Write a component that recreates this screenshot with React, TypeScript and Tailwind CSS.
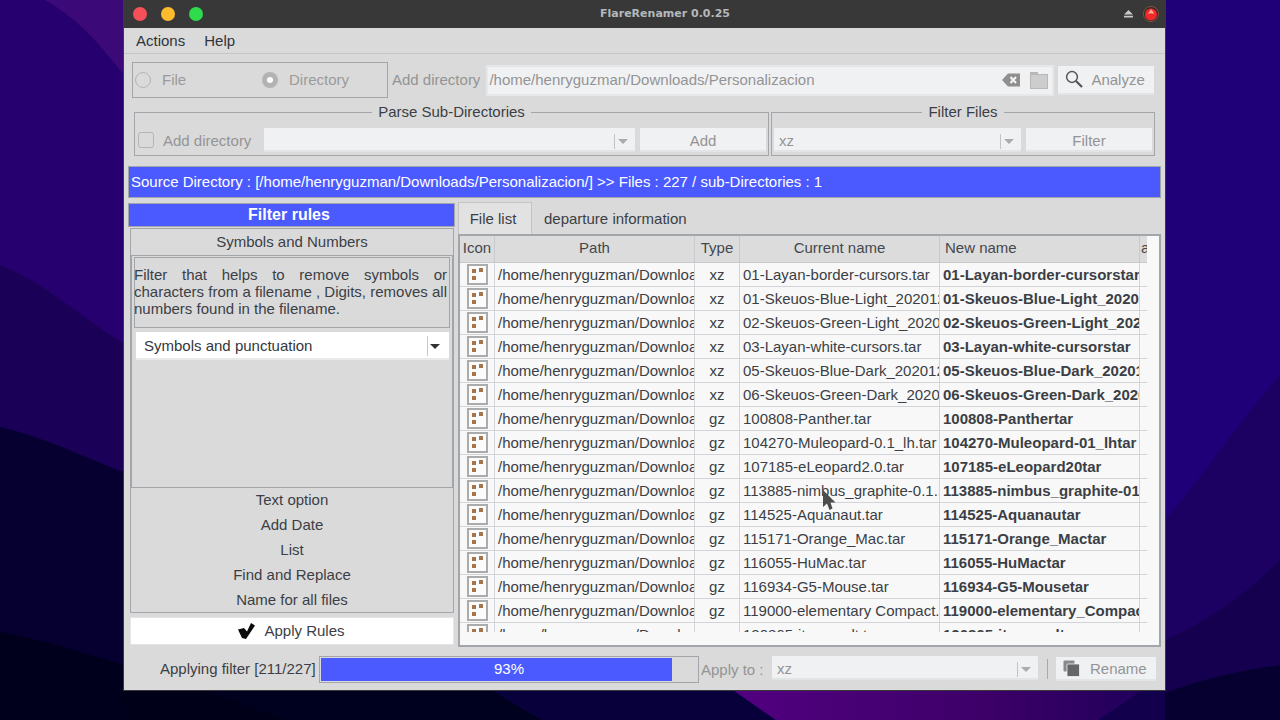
import React from "react";

const rows: [string, string, string][] = [
  ["xz", "01-Layan-border-cursors.tar", "01-Layan-border-cursorstar"],
  ["xz", "01-Skeuos-Blue-Light_20201222", "01-Skeuos-Blue-Light_20201222tar"],
  ["xz", "02-Skeuos-Green-Light_20201222", "02-Skeuos-Green-Light_20201222tar"],
  ["xz", "03-Layan-white-cursors.tar", "03-Layan-white-cursorstar"],
  ["xz", "05-Skeuos-Blue-Dark_20201222", "05-Skeuos-Blue-Dark_20201222tar"],
  ["xz", "06-Skeuos-Green-Dark_20201222", "06-Skeuos-Green-Dark_20201222tar"],
  ["gz", "100808-Panther.tar", "100808-Panthertar"],
  ["gz", "104270-Muleopard-0.1_lh.tar", "104270-Muleopard-01_lhtar"],
  ["gz", "107185-eLeopard2.0.tar", "107185-eLeopard20tar"],
  ["gz", "113885-nimbus_graphite-0.1..", "113885-nimbus_graphite-01tar"],
  ["gz", "114525-Aquanaut.tar", "114525-Aquanautar"],
  ["gz", "115171-Orange_Mac.tar", "115171-Orange_Mactar"],
  ["gz", "116055-HuMac.tar", "116055-HuMactar"],
  ["gz", "116934-G5-Mouse.tar", "116934-G5-Mousetar"],
  ["gz", "119000-elementary Compact.", "119000-elementary_Compact"],
  ["gz", "120865-itunes-alt.tar", "120865-itunes-alt"],
];

function Wallpaper() {
  return (
    <svg className="absolute inset-0" width="1280" height="720" viewBox="0 0 1280 720">
      <defs>
        <linearGradient id="bp" x1="0" y1="0" x2="1" y2="0">
          <stop offset="0" stopColor="#520080" />
          <stop offset="0.6" stopColor="#3c0068" />
          <stop offset="1" stopColor="#1c0058" />
        </linearGradient>
      </defs>
      <rect width="1280" height="720" fill="#270070" />
      <rect x="640" width="640" height="720" fill="#1f0078" />
      <path d="M45 0 C80 20 100 45 124 75 L124 0 Z" fill="#3c0a78" />
      <path d="M0 265 C50 285 90 325 124 343 L130 720 L0 720 Z" fill="#1b0058" />
      <path d="M0 427 C45 437 90 460 124 472 L130 720 L0 720 Z" fill="#05002f" />
      <path d="M0 632 C45 640 90 655 124 665 L300 720 L0 720 Z" fill="#00001c" />
      <path d="M1280 375 C1240 420 1200 480 1165 520 L1165 720 L1280 720 Z" fill="#1c0062" />
      <path d="M1280 560 C1240 600 1200 625 1165 640 L1165 720 L1280 720 Z" fill="#150050" />
      <path d="M1280 665 C1240 670 1200 680 1165 693 L1165 720 L1280 720 Z" fill="#05002f" />
      <path d="M210 690 L284 720 L130 720 L120 690 Z" fill="#000018" />
      <path d="M284 720 L210 690 L492 690 L542 720 Z" fill="#00001f" />
      <path d="M492 690 L733 690 L776 720 L542 720 Z" fill="#08003a" />
      <path d="M733 690 L1165 690 L1098 720 L776 720 Z" fill="url(#bp)" />
      <path d="M1098 720 L1165 675 L1165 720 Z" fill="#12004c" />
    </svg>
  );
}

function RowIcon() {
  return (
    <svg width="21" height="21" viewBox="0 0 21 21" className="block">
      <rect x="1" y="1" width="19" height="19" fill="#fbfbfb" stroke="#ababab" strokeWidth="2" />
      <rect x="5" y="5" width="4" height="4" fill="#a5754a" />
      <rect x="12" y="4" width="4" height="4" fill="#a5754a" />
      <rect x="5" y="12" width="4" height="4" fill="#a5754a" />
    </svg>
  );
}

function Combo({ label, w }: { label: string; w: string }) {
  return (
    <div className={`${w} flex h-[24px] items-center rounded-[1px] border-b-2 border-[#e3e4e6] bg-[#f0f1f3] pt-[4px] text-[#949494]`}>
      <span className="flex-1 pl-[5px]">{label}</span>
      <span className="h-[15px] w-px bg-[#c4c4c4]" />
      <span className="mr-[4px] flex w-[16px] justify-center">
        <span className="h-0 w-0 border-x-[5px] border-t-[5px] border-x-transparent border-t-[#ababab]" />
      </span>
    </div>
  );
}

function Btn({ label, w }: { label: string; w: string }) {
  return (
    <div className={`${w} flex h-[24px] items-center justify-center border-b-2 border-[#e3e4e6] bg-[#f0f1f3] pt-[4px] text-[#949494]`}>
      {label}
    </div>
  );
}

export default function App() {
  return (
    <div className="relative h-[720px] w-[1280px] overflow-hidden bg-[#1f0078] font-['Liberation_Sans',sans-serif] text-[15px] leading-[16px] text-[#3b3f45]">
      <Wallpaper />
      <div className="absolute left-[123px] top-0 flex h-[691px] w-[1043px] flex-col border border-t-0 border-[#3a3a3a] bg-[#dadada]">
        {/* title bar */}
        <div className="relative flex h-[28px] shrink-0 items-center bg-[#383838] pl-[9px]">
          <span className="h-[14px] w-[14px] rounded-full bg-[#f5505a]" />
          <span className="ml-[14px] h-[14px] w-[14px] rounded-full bg-[#fdbc2e]" />
          <span className="ml-[14px] h-[14px] w-[14px] rounded-full bg-[#2ddb4c]" />
          <span className="flex-1 pl-[3px] text-center font-['DejaVu_Sans',sans-serif] text-[11px] font-bold text-[#b4b8bc]">
            FlareRenamer 0.0.25
          </span>
          <svg width="9" height="8" viewBox="0 0 10 9" className="mr-[10px]">
            <path d="M5 0 L10 5 L0 5 Z M0 6.5 H10 V8.5 H0 Z" fill="#c9c9c9" />
          </svg>
          <svg width="16" height="16" viewBox="0 0 16 16" className="mr-[6px]">
            <circle cx="8" cy="8" r="7.6" fill="#3b2a28" stroke="#8d5a4a" strokeWidth="0.8" />
            <circle cx="8" cy="8.5" r="6" fill="#ee2a2a" />
            <path d="M8 3 C8.5 5 11 5.5 11 8 C9 7 7 7 5 8 C5.5 6 7.5 5 8 3 Z" fill="#ffb0a0" />
          </svg>
        </div>
        {/* menu */}
        <div className="flex h-[26px] shrink-0 items-center gap-[19px] border-b border-[#c4c6c8] pl-[12px] text-[#2f343a]">
          <span>Actions</span>
          <span>Help</span>
        </div>
        {/* row 1 */}
        <div className="ml-[8px] mt-[8px] flex h-[36px] shrink-0 items-center">
          <div className="flex h-[36px] w-[256px] items-center border border-[#a2a6aa] text-[#9a9a9a]">
            <span className="ml-[2px] h-[16px] w-[16px] rounded-full border border-[#b5b5b5] bg-[#dadada]" />
            <span className="ml-[11px] w-[96px]">File</span>
            <span className="ml-[4px] flex h-[16px] w-[16px] items-center justify-center rounded-full bg-[#b3b3b3]">
              <span className="h-[6px] w-[6px] rounded-full bg-white" />
            </span>
            <span className="ml-[11px]">Directory</span>
          </div>
          <span className="ml-[4px] text-[#949494]">Add directory</span>
          <div className="ml-[6px] flex h-[31px] w-[568px] items-center border-2 border-[#e6e7e8] bg-[#f0f1f3] pl-[1px] text-[#949494]">
            <span className="flex-1">/home/henryguzman/Downloads/Personalizacion</span>
            <svg width="18" height="14" viewBox="0 0 18 14" className="mr-[10px]">
              <path d="M0 7 L6 0.5 H18 V13.5 H6 Z" fill="#8f8f8f" />
              <path d="M8.5 4 L14 10 M14 4 L8.5 10" stroke="#f0f1f3" strokeWidth="2.2" />
            </svg>
            <svg width="18" height="18" viewBox="0 0 18 18" className="mr-[4px]">
              <path d="M0 1 H8 V3 H18 V18 H0 Z" fill="#b8b8b8" />
              <rect x="1" y="4" width="16" height="13" fill="#cdcdcd" />
            </svg>
          </div>
          <div className="ml-[4px] flex h-[29px] w-[96px] items-center border-b-2 border-[#e3e4e6] bg-[#f0f1f3] pl-[7px] text-[#949494]">
            <svg width="18" height="18" viewBox="0 0 18 18">
              <circle cx="7" cy="7" r="5.4" fill="none" stroke="#555" strokeWidth="1.5" />
              <path d="M11 11 L17 17" stroke="#555" strokeWidth="2.2" />
            </svg>
            <span className="ml-[8px] mt-[2px]">Analyze</span>
          </div>
        </div>
        {/* row 2 */}
        <div className="ml-[10px] mt-[6px] flex h-[52px] shrink-0">
          <fieldset className="h-[52px] w-[635px] border border-[#a2a6aa]">
            <legend className="mx-auto px-[6px]">Parse Sub-Directories</legend>
            <div className="mt-[8px] flex items-center">
              <span className="ml-[3px] h-[16px] w-[16px] rounded-[3px] border border-[#b5b5b5]" />
              <span className="ml-[9px] mt-[2px] w-[101px] text-[#949494]">Add directory</span>
              <Combo label="" w="w-[371px]" />
              <span className="w-[5px]" />
              <Btn label="Add" w="w-[126px]" />
            </div>
          </fieldset>
          <fieldset className="ml-[2px] h-[52px] w-[384px] border border-[#a2a6aa]">
            <legend className="mx-auto px-[6px]">Filter Files</legend>
            <div className="ml-[2px] mt-[8px] flex items-center">
              <Combo label="xz" w="w-[247px]" />
              <span className="w-[5px]" />
              <Btn label="Filter" w="w-[126px]" />
            </div>
          </fieldset>
        </div>
        {/* source bar */}
        <div className="ml-[4px] mt-[10px] flex h-[32px] w-[1033px] shrink-0 items-center border border-[#a2a6aa] bg-[#4a5aff] pl-[2px] text-white">
          Source Directory : [/home/henryguzman/Downloads/Personalizacion/] &gt;&gt; Files : 227 / sub-Directories : 1
        </div>
        {/* main */}
        <div className="ml-[4px] mt-[4px] flex h-[445px] shrink-0">
          {/* left */}
          <div className="mt-px flex w-[327px] flex-col">
            <div className="flex h-[24px] items-center justify-center border border-[#a2a6aa] bg-[#4a5aff] pr-[5px] text-[16px] font-bold text-white">
              Filter rules
            </div>
            <div className="ml-[2px] mt-px flex h-[385px] w-[324px] flex-col border border-[#a2a6aa]">
              <div className="flex h-[26px] shrink-0 items-center justify-center">Symbols and Numbers</div>
              <div className="h-[233px] shrink-0 border-x border-y border-[#a2a6aa] px-[2px] pt-[1px]">
                <div className="flex h-[71px] items-center border border-[#a2a6aa] pb-[2px] pr-[2px]">
                  <p className="-ml-px text-justify leading-[17px]">
                    Filter that helps to remove symbols or characters from a filename , Digits, removes all numbers found in the filename.
                  </p>
                </div>
                <div className="ml-[2px] mt-[4px] flex h-[28px] w-[313px] items-center border-b-2 border-[#e9e9e9] bg-white pl-[8px] pt-[2px] text-[#33373d]">
                  <span className="flex-1">Symbols and punctuation</span>
                  <span className="h-[20px] w-px bg-[#c8c8c8]" />
                  <span className="mr-[7px] flex w-[14px] justify-center">
                    <span className="h-0 w-0 border-x-[5px] border-t-[5px] border-x-transparent border-t-[#333]" />
                  </span>
                </div>
              </div>
              <div className="flex flex-1 flex-col justify-end pb-[0px] text-center">
                {["Text option", "Add Date", "List", "Find and Replace", "Name for all files"].map((t) => (
                  <div key={t} className="flex h-[25px] items-center justify-center pb-[2px]">{t}</div>
                ))}
              </div>
            </div>
            <div className="ml-[2px] mt-[4px] flex h-[28px] w-[324px] items-center justify-center rounded-[1px] border border-[#e5e5e5] bg-white">
              <svg width="17" height="16" viewBox="0 0 17 16" className="-ml-[1px]">
                <path d="M0 6.5 L6 5 L9 8.5 L13 0 L17 2.5 L8 16 L4 15 Z" fill="#0a0a0a" />
              </svg>
              <span className="ml-[9px]">Apply Rules</span>
            </div>
          </div>
          {/* right */}
          <div className="ml-[3px] flex w-[703px] flex-col">
            <div className="flex h-[32px] shrink-0 items-end">
              <div className="flex h-[32px] w-[74px] items-center justify-center border border-b-0 border-[#c2c4c6] bg-[#e2e2e2] pr-[4px]">File list</div>
              <div className="flex h-[31px] items-center pl-[12px]">departure information</div>
            </div>
            <div className="flex h-[414px] flex-col border-2 border-[#a2a6aa] bg-[#f8f8f8]">
              {/* table */}
              <div className="h-[396px] w-[687px] overflow-hidden">
                <div className="flex h-[27px] border-b border-[#c8cad0] bg-[#dcdcdc] text-[#44484e]">
                  <div className="flex w-[35px] shrink-0 items-center justify-center border-r border-[#c8cad0] pb-[3px]">Icon</div>
                  <div className="flex w-[200px] shrink-0 items-center justify-center border-r border-[#c8cad0] pb-[3px]">Path</div>
                  <div className="flex w-[45px] shrink-0 items-center justify-center border-r border-[#c8cad0] pb-[3px]">Type</div>
                  <div className="flex w-[200px] shrink-0 items-center justify-center border-r border-[#c8cad0] pb-[3px]">Current name</div>
                  <div className="flex w-[200px] shrink-0 items-center border-r border-[#c8cad0] pb-[3px] pl-[5px]">New name</div>
                  <div className="flex flex-1 items-center overflow-hidden pb-[3px] pl-[1px]">a</div>
                </div>
                {rows.map(([type, cur, next]) => (
                  <div key={cur} className="flex h-[24px] border-b border-[#d2d4da]">
                    <div className="flex w-[35px] shrink-0 items-center justify-center border-r border-[#d2d4da]"><RowIcon /></div>
                    <div className="flex w-[200px] shrink-0 items-center overflow-hidden whitespace-nowrap border-r border-[#d2d4da] pl-[3px]">/home/henryguzman/Downloads/Personalizacion</div>
                    <div className="flex w-[45px] shrink-0 items-center justify-center border-r border-[#d2d4da]">{type}</div>
                    <div className="flex w-[200px] shrink-0 items-center overflow-hidden whitespace-nowrap border-r border-[#d2d4da] pl-[3px]">{cur}</div>
                    <div className="flex w-[200px] shrink-0 items-center overflow-hidden whitespace-nowrap border-r border-[#d2d4da] pl-[3px] font-bold">{next}</div>
                  </div>
                ))}
              </div>
            </div>
          </div>
        </div>
        {/* bottom */}
        <div className="mt-[7px] flex h-[30px] shrink-0 items-center pl-[36px]">
          <span className="w-[159px] whitespace-nowrap">Applying filter [211/227]</span>
          <div className="relative flex h-[27px] w-[380px] items-center border border-[#a2a6aa] p-px">
            <div className="h-full w-[351px] bg-[#4a5aff]" />
            <span className="absolute inset-0 flex items-center justify-center text-white">93%</span>
          </div>
          <span className="ml-[2px] mt-[1px] w-[71px] text-[#949494]">Apply to :</span>
          <div className="-mt-[2px]">
            <Combo label="xz" w="w-[266px]" />
          </div>
          <span className="ml-[9px] h-[20px] w-px bg-[#a8a8a8]" />
          <div className="ml-[8px] flex h-[24px] w-[100px] items-center border-b-2 border-[#e3e4e6] bg-[#f0f1f3] pl-[7px] text-[#949494]">
            <svg width="17" height="17" viewBox="0 0 17 17">
              <rect x="0.5" y="0.5" width="11" height="11" rx="1" fill="#8a8a8a" />
              <rect x="4" y="4" width="12.5" height="12.5" rx="1" fill="#666" stroke="#f0f1f3" strokeWidth="0.8" />
            </svg>
            <span className="ml-[10px] mt-[2px]">Rename</span>
          </div>
        </div>
      </div>
      {/* mouse cursor */}
      <svg className="absolute left-[823px] top-[490px]" width="13" height="21" viewBox="0 0 13 21">
        <path d="M0 0 V17 L4 13.5 L6.5 20 L9.5 18.5 L7.5 12.5 H12.5 Z" fill="#4c4c4c" />
      </svg>
    </div>
  );
}
